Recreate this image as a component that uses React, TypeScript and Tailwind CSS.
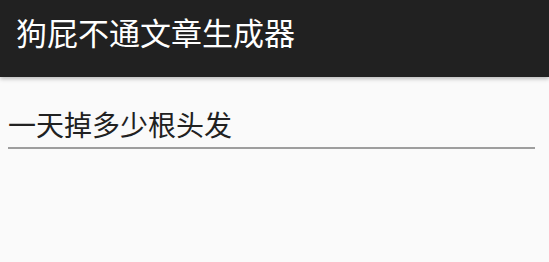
export default function App() {
  const font = { fontFamily: '"Noto Sans CJK SC", "Noto Sans", sans-serif' }
  return (
    <div className="flex h-[262px] w-[549px] flex-col bg-[#fafafa]" style={font}>
      <div className="relative flex h-[77px] items-start bg-[#212121] pl-[16px] pt-[16px] shadow-[0_2px_4px_rgba(0,0,0,0.25)]">
        <h1 className="text-[31px] leading-none text-white">狗屁不通文章生成器</h1>
      </div>
      <div className="px-[8px] pt-[30px]">
        <input
          defaultValue="一天掉多少根头发"
          className="w-[527px] border-b-2 border-[#9e9e9e] bg-transparent pb-[6px] text-[28px] leading-[34px] text-[#212121] outline-none"
        />
      </div>
    </div>
  )
}
